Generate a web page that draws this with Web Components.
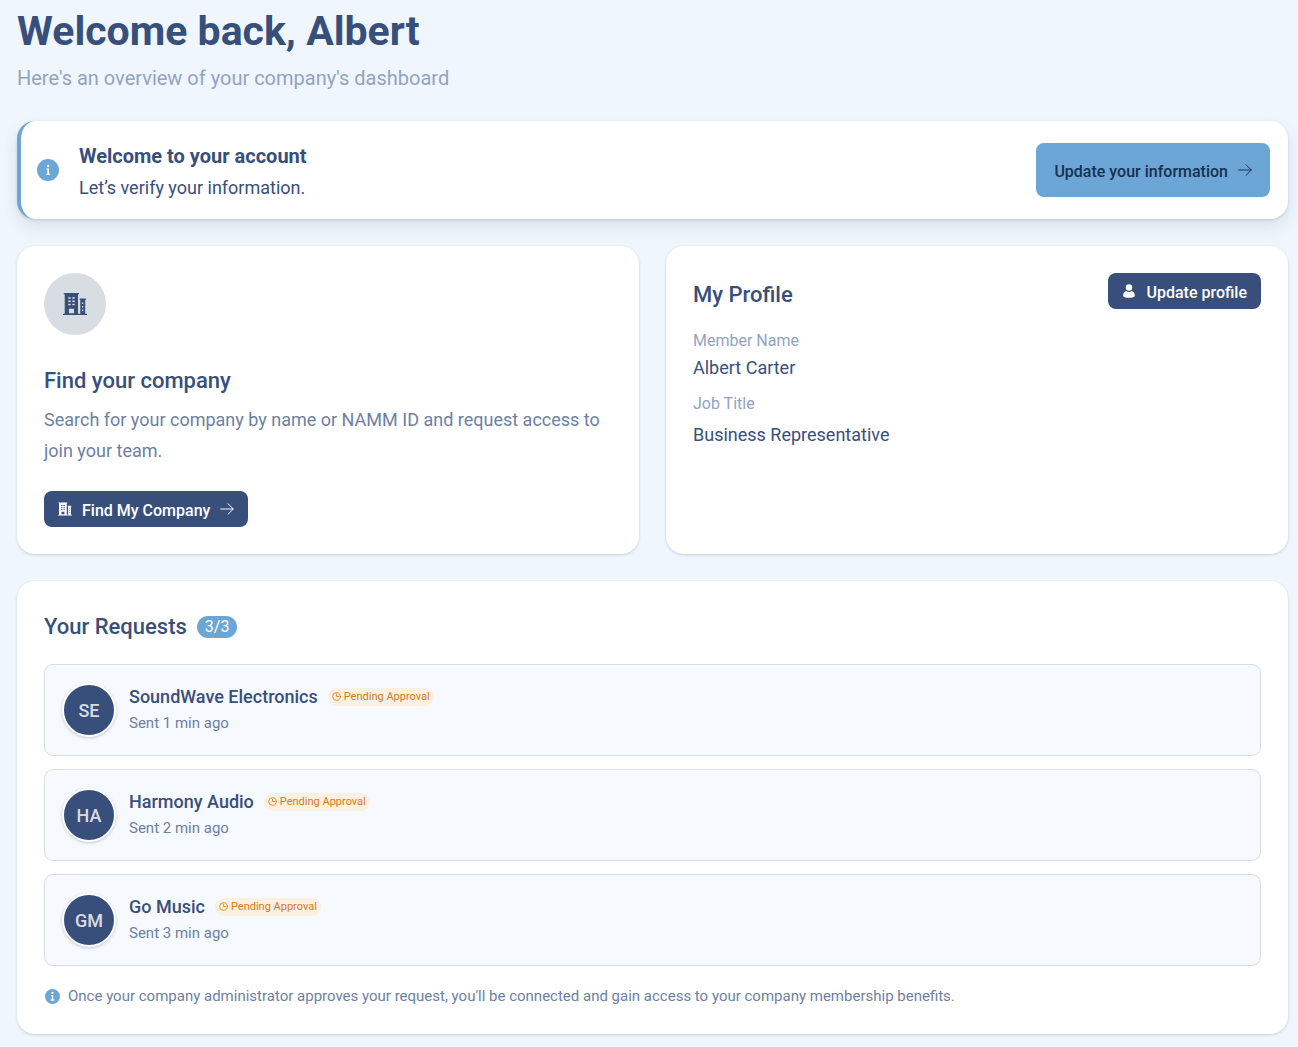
<!DOCTYPE html>
<html lang="en">
<head>
<meta charset="utf-8">
<meta name="viewport" content="width=device-width, initial-scale=1">
<title>Company Dashboard</title>
<style>
    body {
        --navy: #384f7b;
        --blue: #6ba6d6;
        --muted: #93a3c0;
        --slate: #6d7fa3;
        --line: #d8dde3;
        margin: 0;
        background: #eff6fd;
        color: var(--navy);
        font-family: Roboto, "Liberation Sans", sans-serif;
    }
</style>
</head>
<body>
<dashboard-page></dashboard-page>

<script>
const ICONS = {
    arrow: `<svg viewBox="0 0 16 16" fill="none" stroke="currentColor" stroke-width="1.100" stroke-linecap="round" stroke-linejoin="round"><path d="M.8 8h14.400M9.200 2 15.200 8l-6 6"/></svg>`,
    user: `<svg viewBox="0 0 16 16" fill="currentColor"><circle cx="8" cy="4" r="3.700"/><path d="M4.800 8Q8 10.200 11.200 8C13.400 8.800 14.700 10.800 14.700 13.300Q14 15.700 8 15.700T1.300 13.300C1.300 10.800 2.600 8.800 4.800 8Z"/></svg>`,
    building: `<svg viewBox="0 0 24 24" fill="currentColor"><path fill-rule="evenodd" d="M.7 1h15.300v1.300H15V21.700h2.300V7.700h-.7V6.400H23v1.300h-.8V21.700H24V23H0V21.700h1.700V2.300H.7ZM5.300 5.300v1.500h2.400V5.300ZM9.300 5.300v1.500h2.400V5.300ZM5.300 8.500V10h2.400V8.500ZM9.300 8.500V10h2.400V8.500ZM5.300 11.700v1.500h2.400v-1.500ZM9.300 11.700v1.500h2.400v-1.500ZM6 16.800v4.400h5v-4.400ZM19 10.500v1.500h1.300v-1.500ZM19 14v1.500h1.300V14ZM19 17.500V19h1.300v-1.500Z"/></svg>`,
    info: `<svg viewBox="0 0 22 22"><circle cx="11" cy="11" r="11" fill="currentColor"/><circle cx="11.200" cy="7" r="1.200" fill="#fff"/><path d="M9.300 9.500h2.700v5.300h1.200v1H9.100v-1h1.300v-4.300H9.300Z" fill="#fff"/></svg>`,
    infoSmall: `<svg viewBox="0 0 16 16"><circle cx="8" cy="8" r="8" fill="currentColor"/><circle cx="8" cy="4" r="1.200" fill="#fff"/><path d="M6.200 6.400h2.600v4.900h1.300v1.200H6v-1.200h1.300V7.600H6.200Z" fill="#fff"/></svg>`,
    clock: `<svg viewBox="0 0 16 16" fill="none" stroke="currentColor" stroke-width="1.400" stroke-linecap="round"><circle cx="8" cy="8" r="6.800"/><path d="M8 3.500V8h4"/></svg>`
};

class AppIcon extends HTMLElement {

    constructor() {
        super();
        this.shadowDOM = this.attachShadow({ mode: "open" });
    }

    connectedCallback() {
        this.shadowDOM.innerHTML = `
            <style>
                :host {
                    display: block;
                    flex: none;
                    width: 14px;
                    height: 14px;
                }

                svg {
                    display: block;
                    width: 100%;
                    height: 100%;
                }
            </style>
            ${ICONS[this.getAttribute("name")]}
        `;
    }
}

class AppButton extends HTMLElement {

    constructor() {
        super();
        this.shadowDOM = this.attachShadow({ mode: "open" });
    }

    connectedCallback() {
        this.shadowDOM.innerHTML = `
            <style>
                :host {
                    display: block;
                    flex: none;
                }

                button {
                    display: flex;
                    align-items: center;
                    gap: 10px;
                    height: 36px;
                    padding: 0 14px;
                    border: 0;
                    border-radius: 8px;
                    background: var(--navy);
                    color: #fff;
                    font: 500 16px/24px Roboto, "Liberation Sans", sans-serif;
                    white-space: nowrap;
                    cursor: pointer;
                }

                span {
                    padding-top: 3px;
                }

                :host([size="large"]) button {
                    height: 54px;
                    padding: 0 18px;
                    background: var(--blue);
                    color: #17304f;
                }
            </style>
            <button type="button"><slot name="before"></slot><span><slot></slot></span><slot name="after"></slot></button>
        `;
    }
}

class AppCard extends HTMLElement {

    constructor() {
        super();
        this.shadowDOM = this.attachShadow({ mode: "open" });
    }

    connectedCallback() {
        this.shadowDOM.innerHTML = `
            <style>
                :host {
                    display: block;
                    padding: 27px;
                    border-radius: 18px;
                    background: #fff;
                    box-shadow: 0 1px 3px rgba(30, 50, 80, .2);
                }
            </style>
            <slot></slot>
        `;
    }
}

class WelcomeBanner extends HTMLElement {

    constructor() {
        super();
        this.shadowDOM = this.attachShadow({ mode: "open" });
    }

    connectedCallback() {
        this.shadowDOM.innerHTML = `
            <style>
                :host {
                    display: flex;
                    align-items: center;
                    gap: 20px;
                    padding: 16px 18px 16px 16px;
                    border-left: 4px solid var(--blue);
                    border-radius: 18px;
                    background: #fff;
                    box-shadow: 0 8px 16px rgba(30, 50, 80, .1), 0 1px 3px rgba(30, 50, 80, .15);
                }

                app-icon {
                    width: 22px;
                    height: 22px;
                    color: var(--blue);
                }

                .text {
                    flex: 1;
                    padding-top: 4px;
                    font-size: 18px;
                    line-height: 31px;
                }

                h2, p {
                    margin: 0;
                }

                h2 {
                    font-size: 20px;
                    font-weight: 700;
                }
            </style>
            <app-icon name="info"></app-icon>
            <div class="text">
                <h2><slot name="title"></slot></h2>
                <p><slot></slot></p>
            </div>
            <slot name="action"></slot>
        `;
    }
}

class FindCompany extends HTMLElement {

    constructor() {
        super();
        this.shadowDOM = this.attachShadow({ mode: "open" });
    }

    connectedCallback() {
        this.shadowDOM.innerHTML = `
            <style>
                :host {
                    display: flex;
                    flex-direction: column;
                    align-items: flex-start;
                }

                .circle {
                    display: grid;
                    place-items: center;
                    width: 62px;
                    height: 62px;
                    margin-bottom: 30px;
                    border-radius: 50%;
                    background: #d8dde3;
                }

                .circle app-icon {
                    width: 24px;
                    height: 24px;
                }

                h2 {
                    margin: 0 0 7px;
                    font-size: 22px;
                    font-weight: 500;
                    line-height: 32px;
                }

                p {
                    margin: 0 0 25px;
                    color: var(--slate);
                    font-size: 18px;
                    line-height: 31px;
                }
            </style>
            <div class="circle"><app-icon name="building"></app-icon></div>
            <h2>Find your company</h2>
            <p>Search for your company by name or NAMM ID and request access to join your team.</p>
            <app-button>
                <app-icon slot="before" name="building"></app-icon>
                Find My Company
                <app-icon slot="after" name="arrow"></app-icon>
            </app-button>
        `;
    }
}

class MemberProfile extends HTMLElement {

    constructor() {
        super();
        this.shadowDOM = this.attachShadow({ mode: "open" });
    }

    connectedCallback() {
        this.shadowDOM.innerHTML = `
            <style>
                :host {
                    display: block;
                }

                header {
                    display: flex;
                    align-items: flex-start;
                    justify-content: space-between;
                }

                h2 {
                    margin: 0;
                    font-size: 22px;
                    font-weight: 500;
                    line-height: 44px;
                }

                dl {
                    margin: 12px 0 0;
                    line-height: 24px;
                }

                dt {
                    color: var(--muted);
                    font-size: 16px;
                }

                dd {
                    margin: 3px 0 12px;
                    font-size: 18px;
                }

                dd:last-child {
                    margin-top: 7px;
                }
            </style>
            <header>
                <h2>My Profile</h2>
                <app-button><app-icon slot="before" name="user"></app-icon>Update profile</app-button>
            </header>
            <dl>
                <dt>Member Name</dt>
                <dd>${this.getAttribute("name")}</dd>
                <dt>Job Title</dt>
                <dd>${this.getAttribute("job")}</dd>
            </dl>
        `;
    }
}

class RequestItem extends HTMLElement {

    constructor() {
        super();
        this.shadowDOM = this.attachShadow({ mode: "open" });
    }

    connectedCallback() {
        this.shadowDOM.innerHTML = `
            <style>
                :host {
                    display: flex;
                    align-items: center;
                    gap: 13px;
                    padding: 18px 17px;
                    border: 1px solid var(--line);
                    border-radius: 9px;
                    background: #f6f9fe;
                }

                .avatar {
                    display: grid;
                    place-items: center;
                    width: 50px;
                    height: 50px;
                    border: 2px solid #fff;
                    border-radius: 50%;
                    background: var(--navy);
                    box-shadow: 0 1px 3px rgba(30, 50, 80, .25);
                    color: #d8dde3;
                    font-size: 18px;
                    font-weight: 500;
                }

                .name {
                    display: flex;
                    align-items: center;
                    gap: 10px;
                }

                h3 {
                    margin: 0;
                    font-size: 18px;
                    font-weight: 500;
                    line-height: 27px;
                }

                .status {
                    display: flex;
                    align-items: center;
                    gap: 3px;
                    padding: 0 4px;
                    border-radius: 9px;
                    background: #fdf0e0;
                    color: #d57a1a;
                    font-size: 11px;
                    line-height: 18px;
                }

                .status app-icon {
                    width: 9px;
                    height: 9px;
                }

                p {
                    margin: 0;
                    color: var(--slate);
                    font-size: 15px;
                    line-height: 27px;
                }
            </style>
            <div class="avatar">${this.getAttribute("initials")}</div>
            <div>
                <div class="name">
                    <h3><slot></slot></h3>
                    <span class="status"><app-icon name="clock"></app-icon>Pending Approval</span>
                </div>
                <p>${this.getAttribute("sent")}</p>
            </div>
        `;
    }
}

class RequestList extends HTMLElement {

    constructor() {
        super();
        this.shadowDOM = this.attachShadow({ mode: "open" });
    }

    connectedCallback() {
        this.shadowDOM.innerHTML = `
            <style>
                :host {
                    display: block;
                }

                header {
                    display: flex;
                    align-items: center;
                    gap: 10px;
                    margin-bottom: 18px;
                }

                h2 {
                    margin: 0;
                    font-size: 22px;
                    font-weight: 500;
                    line-height: 38px;
                }

                .count {
                    padding: 0 8px;
                    border-radius: 11px;
                    background: var(--blue);
                    color: #fff;
                    font-size: 16px;
                    line-height: 22px;
                }

                .items {
                    display: grid;
                    gap: 13px;
                }

                .note {
                    display: flex;
                    align-items: center;
                    gap: 8px;
                    margin: 19px 0 0;
                    padding-left: 1px;
                    color: var(--slate);
                    font-size: 15px;
                    line-height: 22px;
                }

                .note app-icon {
                    width: 15px;
                    height: 15px;
                    color: var(--blue);
                }
            </style>
            <header>
                <h2>Your Requests</h2>
                <span class="count">3/3</span>
            </header>
            <div class="items"><slot></slot></div>
            <p class="note">
                <app-icon name="infoSmall"></app-icon>
                <span>Once your company administrator approves your request, you'll be connected and gain access to your company membership benefits.</span>
            </p>
        `;
    }
}

class DashboardPage extends HTMLElement {

    constructor() {
        super();
        this.shadowDOM = this.attachShadow({ mode: "open" });
    }

    connectedCallback() {
        this.render();
    }

    render() {
        this.shadowDOM.innerHTML = `
            <style>
                :host {
                    display: block;
                    padding: 6px 10px 13px 17px;
                }

                h1, .intro {
                    margin: 0;
                }

                h1 {
                    font-size: 41px;
                    font-weight: 700;
                    line-height: 50px;
                }

                .intro {
                    margin: 6px 0 27px;
                    color: var(--muted);
                    font-size: 20px;
                    line-height: 32px;
                }

                .cards {
                    display: grid;
                    grid-template-columns: 1fr 1fr;
                    gap: 27px;
                    margin: 27px 0;
                }

                @media (max-width: 800px) {
                    .cards {
                        grid-template-columns: 1fr;
                    }
                }
            </style>

            <h1>Welcome back, Albert</h1>
            <p class="intro">Here's an overview of your company's dashboard</p>
            <welcome-banner>
                <span slot="title">Welcome to your account</span>
                Let’s verify your information.
                <app-button slot="action" size="large">Update your information<app-icon slot="after" name="arrow"></app-icon></app-button>
            </welcome-banner>
            <div class="cards">
                <app-card><find-company></find-company></app-card>
                <app-card><member-profile name="Albert Carter" job="Business Representative"></member-profile></app-card>
            </div>
            <app-card>
                <request-list>
                    <request-item initials="SE" sent="Sent 1 min ago">SoundWave Electronics</request-item>
                    <request-item initials="HA" sent="Sent 2 min ago">Harmony Audio</request-item>
                    <request-item initials="GM" sent="Sent 3 min ago">Go Music</request-item>
                </request-list>
            </app-card>
        `;
    }
}

customElements.define("app-icon", AppIcon);
customElements.define("app-button", AppButton);
customElements.define("app-card", AppCard);
customElements.define("welcome-banner", WelcomeBanner);
customElements.define("find-company", FindCompany);
customElements.define("member-profile", MemberProfile);
customElements.define("request-item", RequestItem);
customElements.define("request-list", RequestList);
customElements.define("dashboard-page", DashboardPage);
</script>
</body>
</html>
